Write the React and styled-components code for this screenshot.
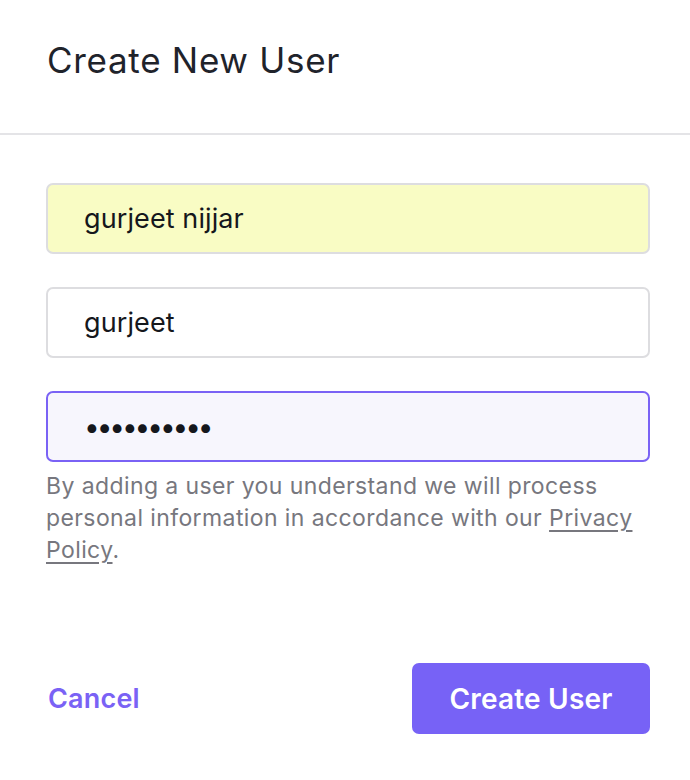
import React from "react";
import styled, { createGlobalStyle } from "styled-components";

const Global = createGlobalStyle`
  html, body { margin: 0; padding: 0; background: #fff; }
  body { font-family: Inter, "Noto Sans", sans-serif; -webkit-font-smoothing: antialiased; }
  * { box-sizing: border-box; }
`;

const Dialog = styled.div`
  width: 690px;
  height: 780px;
  background: #fff;
  display: flex;
  flex-direction: column;
`;

const Header = styled.header`
  height: 135px;
  padding: 0 47px;
  display: flex;
  align-items: center;
  padding-bottom: 13px;
  border-bottom: 2px solid #e4e4e7;
`;

const Title = styled.h1`
  margin: 0;
  font-size: 35px;
  font-weight: 400;
  color: #1f232b;
  letter-spacing: 0.7px;
`;

const Body = styled.div`
  padding: 48px 40px 0 46px;
  display: flex;
  flex-direction: column;
`;

const Fields = styled.div`
  display: flex;
  flex-direction: column;
  gap: 33px;
`;

const Input = styled.input`
  width: 604px;
  height: 71px;
  padding: 0 36px;
  border: 2px solid ${(p) => (p.$focused ? "#7a62f5" : "#dddde0")};
  border-radius: 7px;
  background: ${(p) => (p.$autofill ? "#f9fcc4" : p.$focused ? "#f7f6fd" : "#fff")};
  font-family: Inter, "Noto Sans", sans-serif;
  font-size: ${(p) => (p.type === "password" ? "28px" : "27px")};
  color: #15171c;
  outline: none;
  letter-spacing: ${(p) => (p.type === "password" ? "-3.1px" : "0.1px")};
`;

const Help = styled.p`
  margin: 8px 0 0;
  width: 604px;
  font-size: 23px;
  line-height: 32px;
  letter-spacing: 0.4px;
  color: #77777e;
`;

const Link = styled.a`
  color: #77777e;
  text-decoration: underline;
  text-underline-offset: 4px;
`;

const Footer = styled.div`
  margin-top: auto;
  padding: 0 40px 46px 46px;
  display: flex;
  align-items: center;
  justify-content: space-between;
`;

const CancelButton = styled.button`
  background: none;
  border: none;
  padding: 0 2px;
  font-family: Inter, "Noto Sans", sans-serif;
  font-size: 27px;
  font-weight: 600;
  letter-spacing: 0.2px;
  color: #7a62f5;
  cursor: pointer;
`;

const PrimaryButton = styled.button`
  width: 238px;
  height: 71px;
  border: none;
  border-radius: 7px;
  background: #7762f6;
  color: #fff;
  font-family: Inter, "Noto Sans", sans-serif;
  font-size: 28px;
  font-weight: 600;
  letter-spacing: 0.2px;
  cursor: pointer;
`;

export default function App() {
  return (
    <>
      <Global />
      <Dialog>
        <Header>
          <Title>Create New User</Title>
        </Header>
        <Body>
          <Fields>
            <Input $autofill defaultValue="gurjeet nijjar" />
            <Input defaultValue="gurjeet" />
            <Input $focused type="password" defaultValue="gurjeet123" />
          </Fields>
          <Help>
            By adding a user you understand we will process personal information in accordance with our{" "}
            <Link href="#">Privacy Policy</Link>.
          </Help>
        </Body>
        <Footer>
          <CancelButton>Cancel</CancelButton>
          <PrimaryButton>Create User</PrimaryButton>
        </Footer>
      </Dialog>
    </>
  );
}
